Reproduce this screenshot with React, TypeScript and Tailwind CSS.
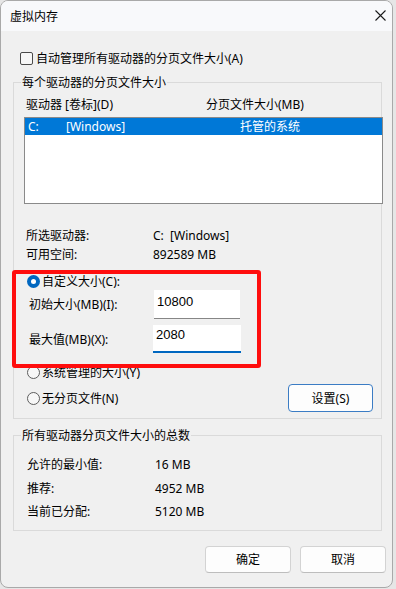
import React from 'react'

function Radio({ checked }: { checked?: boolean }) {
  if (checked) {
    return (
      <span className="flex h-[13px] w-[13px] shrink-0 items-center justify-center rounded-full bg-[#0067c0]">
        <span className="h-[5px] w-[5px] rounded-full bg-white" />
      </span>
    )
  }
  return <span className="h-[13px] w-[13px] shrink-0 rounded-full border border-[#5d5d5d] bg-[#f7f7f7]" />
}

function Btn({ label, accent }: { label: string; accent?: boolean }) {
  return (
    <button
      type="button"
      className={
        accent
          ? 'flex h-[28px] w-[85px] items-center justify-center rounded-[4px] border border-[#3b7cc4] bg-[#fdfdfd] leading-[17px]'
          : 'flex h-[27px] w-[86px] items-center justify-center rounded-[4px] border border-[#d3d3d3] border-b-[#bdbdbd] bg-[#fdfdfd] leading-[17px]'
      }
    >
      {label}
    </button>
  )
}

export default function App() {
  return (
    <div className="relative h-[589px] w-[396px] overflow-hidden bg-[#e6e6e6] font-['Noto_Sans','Noto_Sans_CJK_SC',sans-serif] text-[12px] text-black">
      <div className="h-[588px] w-[393px] overflow-hidden rounded-[8px] border border-[#a9a9a9] bg-[#f0f0f0]">
        {/* title bar */}
        <div className="flex h-[30px] items-center justify-between bg-[#f8f9fb] pl-[9px] pr-[6px]">
          <span className="text-[12px] leading-[17px]">虚拟内存</span>
          <svg width="11" height="11" viewBox="0 0 11 11" className="mt-[-1px]">
            <path d="M0.5 0.5 L10.5 10.5 M10.5 0.5 L0.5 10.5" stroke="#1a1a1a" strokeWidth="1.1" fill="none" />
          </svg>
        </div>

        {/* auto manage */}
        <div className="mt-[19px] flex items-center pl-[19px] leading-[17px]">
          <span className="h-[13px] w-[13px] rounded-[2px] border border-[#4a4a4a] bg-[#f7f7f7]" />
          <span className="ml-[3px]">自动管理所有驱动器的分页文件大小(A)</span>
        </div>

        {/* per drive */}
        <fieldset className="ml-[12px] mt-[7px] w-[369px] min-w-0 border border-[#dadada] px-[10px] pb-[6px]">
          <legend className="-ml-[3px] px-[1px] leading-[17px]">每个驱动器的分页文件大小</legend>
          <div className="mt-[5px] flex pl-[2px] leading-[17px]">
            <span className="w-[180px]">驱动器 [卷标](D)</span>
            <span>分页文件大小(MB)</span>
          </div>
          <div className="mt-[4px] h-[87px] w-[359px] border border-[#8a8a8a] bg-white">
            <div className="flex h-[17px] items-center bg-[#0078d7] pl-[3px] leading-[17px] text-white">
              <span className="w-[38px]">C:</span>
              <span className="w-[174px]">[Windows]</span>
              <span>托管的系统</span>
            </div>
          </div>

          <div className="mt-[23px] flex pl-[2px] leading-[17px]">
            <span className="w-[127px]">所选驱动器:</span>
            <span>C:&nbsp;&nbsp;[Windows]</span>
          </div>
          <div className="mt-[2px] flex pl-[2px] leading-[17px]">
            <span className="w-[127px]">可用空间:</span>
            <span>892589 MB</span>
          </div>

          <div className="mt-[10px] flex items-center pl-[3px] leading-[17px]">
            <Radio checked />
            <span className="ml-[2px]">自定义大小(C):</span>
          </div>
          <div className="flex h-[29px] items-center pl-[5px]">
            <span className="w-[125px] leading-[17px]">初始大小(MB)(I):</span>
            <div className="h-[29px] w-[86px] border-b border-[#868686] bg-white pl-[3px] pt-[3px] font-['Liberation_Sans',sans-serif] text-[13px] leading-[17px]">
              10800
            </div>
          </div>
          <div className="mt-[6px] flex h-[28px] items-center pl-[5px]">
            <span className="w-[124px] leading-[17px]">最大值(MB)(X):</span>
            <div className="h-[28px] w-[88px] border-b-2 border-[#0067c0] bg-white pl-[3px] pt-[1px] font-['Liberation_Sans',sans-serif] text-[13px] leading-[17px]">
              2080
            </div>
          </div>

          <div className="mt-[11px] flex items-center pl-[3px] leading-[17px]">
            <Radio />
            <span className="ml-[2px]">系统管理的大小(Y)</span>
          </div>
          <div className="mt-[3px] flex h-[28px] items-center pl-[3px] leading-[17px]">
            <Radio />
            <span className="ml-[2px]">无分页文件(N)</span>
            <div className="-mr-[2px] ml-auto">
              <Btn label="设置(S)" accent />
            </div>
          </div>
        </fieldset>

        {/* totals */}
        <fieldset className="ml-[12px] mt-[8px] w-[369px] min-w-0 border border-[#dadada] px-[10px] pb-[10px]">
          <legend className="-ml-[3px] px-[1px] leading-[17px]">所有驱动器分页文件大小的总数</legend>
          <div className="mt-[12px] flex pl-[3px] leading-[17px]">
            <span className="w-[128px]">允许的最小值:</span>
            <span>16 MB</span>
          </div>
          <div className="mt-[7px] flex pl-[3px] leading-[17px]">
            <span className="w-[128px]">推荐:</span>
            <span>4952 MB</span>
          </div>
          <div className="mt-[6px] flex pl-[3px] leading-[17px]">
            <span className="w-[128px]">当前已分配:</span>
            <span>5120 MB</span>
          </div>
        </fieldset>

        <div className="mt-[15px] flex justify-end gap-[9px] pr-[6px]">
          <Btn label="确定" />
          <Btn label="取消" />
        </div>
      </div>

      {/* annotation */}
      <div className="absolute left-[12px] top-[270px] h-[98px] w-[249px] rounded-[3px] border-[4px] border-[#ff0d0d]" />
    </div>
  )
}
